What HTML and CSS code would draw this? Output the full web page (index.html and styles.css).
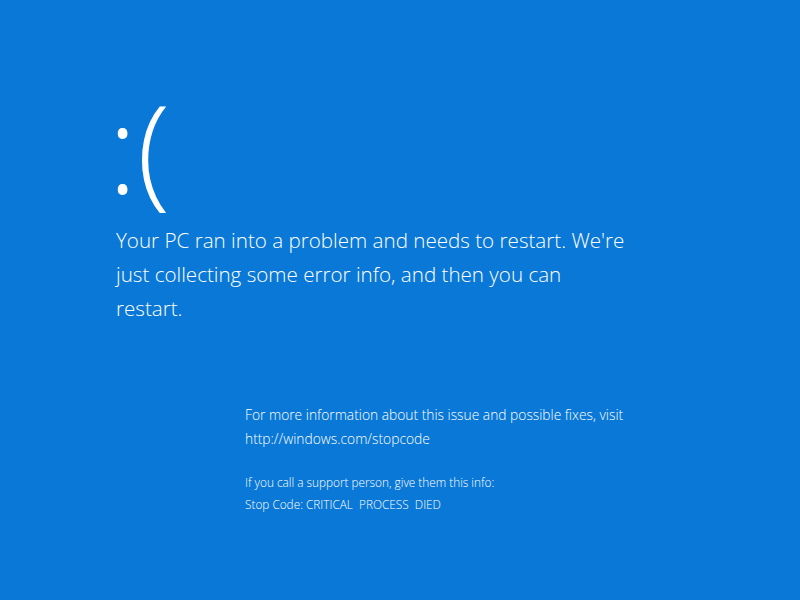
FILE: index.html
```html
<!DOCTYPE html>
<html lang="en">
<head>
  <meta charset="UTF-8">
  <title>Your PC ran into a problem</title>
  <link rel="stylesheet" href="styles.css">
</head>
<body>
  <div class="screen">
    <div class="face">:(</div>
    <p class="message">Your PC ran into a problem and needs to restart. We're just collecting some error info, and then you can restart.</p>
    <div class="details">
      <p class="info">For more information about this issue and possible fixes, visit<br>http://windows.com/stopcode</p>
      <p class="support">If you call a support person, give them this info:<br>Stop Code: CRITICAL&nbsp; PROCESS&nbsp; DIED</p>
    </div>
  </div>
</body>
</html>
```

FILE: styles.css
```css
body, html {
  margin: 0;
  padding: 0;
  width: 100%;
  height: 100%;
  background-color: #0a78d6;
  color: #fff;
  font-family: "Open Sans", "Noto Sans", sans-serif;
  font-weight: 300;
  overflow: hidden;
}
.screen {
  padding: 82px 0 0 116px;
}
.face {
  font-size: 122px;
  line-height: 130px;
  margin-left: -8px;
}
.message {
  width: 516px;
  margin: 11px 0 0;
  font-size: 20.6px;
  line-height: 34px;
}
.details {
  margin-left: 129px;
  margin-top: 78px;
}
.info {
  margin: 0;
  font-size: 13.8px;
  line-height: 24px;
}
.support {
  margin: 20px 0 0;
  font-size: 11.8px;
  line-height: 22px;
}
```
